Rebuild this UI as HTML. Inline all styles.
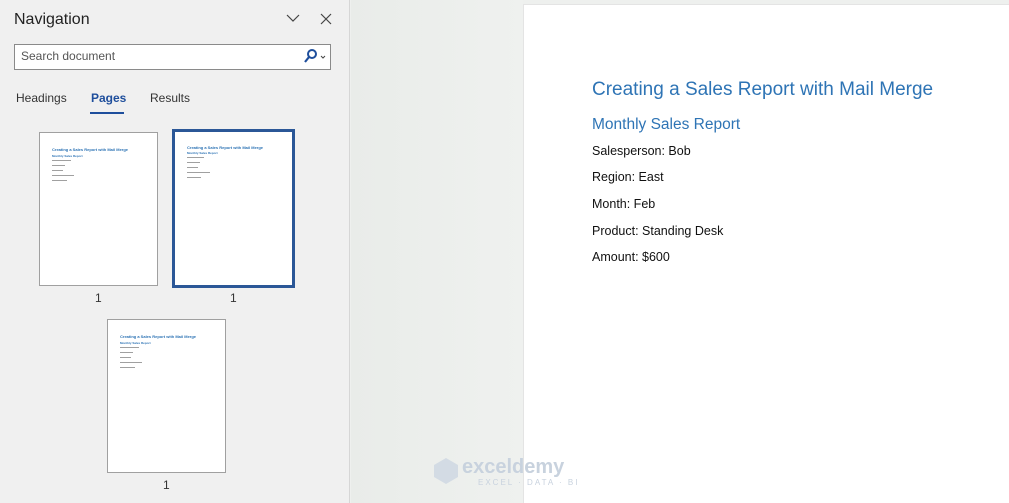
<!DOCTYPE html><html><head><style>
*{margin:0;padding:0;box-sizing:border-box}
body{width:1009px;height:503px;overflow:hidden;position:relative;font-family:"Liberation Sans",sans-serif;background:#eef0ee}
.nav{position:absolute;left:0;top:0;width:350px;height:503px;background:#f0f0f0;border-right:1px solid #d6d6d6}
.a{position:absolute;white-space:nowrap}
.th{position:absolute;background:#fff;border:1px solid #a0a0a0}
.th .t{position:absolute;left:12px;top:14px;font-size:4px;color:#2e74b5;font-weight:bold}
.th .s{position:absolute;left:12px;top:21px;font-size:3px;color:#2e74b5;font-weight:bold}
.th .l{position:absolute;left:12px;height:1px;background:#777;opacity:.7}
.mid{position:absolute;left:351px;top:0;width:172px;height:503px;background:linear-gradient(90deg,#e9ece9,#eff1ef)}
.doc{position:absolute;left:523px;top:4px;width:486px;height:499px;background:#fff;border-left:1px solid #e4e4e4;border-top:1px solid #e4e4e4}
.dt{position:absolute;left:68px;color:#2e74b5;white-space:nowrap}
.db{position:absolute;left:68px;font-size:12.5px;color:#111;white-space:nowrap}
</style></head><body>
<div class="nav">
<div class="a" style="left:14px;top:11px;font-size:16px;color:#222">Navigation</div>
<svg class="a" style="left:286px;top:13px" width="14" height="10"><path d="M1 2l6 6 6-6" fill="none" stroke="#444" stroke-width="1.2"/></svg>
<svg class="a" style="left:320px;top:13px" width="12" height="12"><path d="M1 1l10 10M11 1L1 11" stroke="#444" stroke-width="1.2"/></svg>
<div class="a" style="left:14px;top:44px;width:317px;height:26px;background:#fff;border:1px solid #8a8a8a"></div>
<div class="a" style="left:21px;top:49px;font-size:12px;color:#555">Search document</div>
<svg class="a" style="left:303px;top:48px" width="26" height="16"><circle cx="9" cy="6" r="4" fill="none" stroke="#1e4e9c" stroke-width="2"/><path d="M6 9l-4 5" stroke="#1e4e9c" stroke-width="2.2"/><path d="M18 8l2 2 2-2" fill="none" stroke="#444"/></svg>
<div class="a" style="left:16px;top:91px;font-size:12px;color:#333">Headings</div>
<div class="a" style="left:91px;top:91px;font-size:12px;color:#1e4e9c;font-weight:bold">Pages</div>
<div class="a" style="left:90px;top:112px;width:34px;height:2px;background:#1e4e9c"></div>
<div class="a" style="left:150px;top:91px;font-size:12px;color:#333">Results</div>
<div class="th" style="left:39px;top:132px;width:119px;height:154px"><div class="t">Creating a Sales Report with Mail Merge</div><div class="s">Monthly Sales Report</div><div class="l" style="top:27px;width:19px"></div><div class="l" style="top:32px;width:13px"></div><div class="l" style="top:37px;width:11px"></div><div class="l" style="top:42px;width:22px"></div><div class="l" style="top:47px;width:15px"></div></div>
<div class="th" style="left:172px;top:129px;width:123px;height:159px;border:3px solid #2b5797"><div class="t" style="top:13px">Creating a Sales Report with Mail Merge</div><div class="s" style="top:19px">Monthly Sales Report</div><div class="l" style="top:25px;width:17px"></div><div class="l" style="top:30px;width:13px"></div><div class="l" style="top:35px;width:11px"></div><div class="l" style="top:40px;width:23px"></div><div class="l" style="top:45px;width:14px"></div></div>
<div class="th" style="left:107px;top:319px;width:119px;height:154px"><div class="t">Creating a Sales Report with Mail Merge</div><div class="s">Monthly Sales Report</div><div class="l" style="top:27px;width:19px"></div><div class="l" style="top:32px;width:13px"></div><div class="l" style="top:37px;width:11px"></div><div class="l" style="top:42px;width:22px"></div><div class="l" style="top:47px;width:15px"></div></div>
<div class="a" style="left:95px;top:291px;font-size:12px;color:#333">1</div>
<div class="a" style="left:230px;top:291px;font-size:12px;color:#333">1</div>
<div class="a" style="left:163px;top:478px;font-size:12px;color:#333">1</div>
</div>
<div class="mid"></div>
<div class="doc">
<div class="dt" style="top:74px;font-size:19px">Creating a Sales Report with Mail Merge</div>
<div class="dt" style="top:111px;font-size:15.5px">Monthly Sales Report</div>
<div class="db" style="top:139px">Salesperson: Bob</div>
<div class="db" style="top:165px">Region: East</div>
<div class="db" style="top:192px">Month: Feb</div>
<div class="db" style="top:219px">Product: Standing Desk</div>
<div class="db" style="top:245px">Amount: $600</div>
</div>
<svg class="a" style="left:432px;top:456px" width="28" height="30"><path d="M14 2l12 7v12l-12 7-12-7V9z" fill="#d3dbe4"/></svg>
<div class="a" style="left:462px;top:456px;font-size:20px;color:#c8d2de;font-weight:bold">exceldemy</div>
<div class="a" style="left:478px;top:478px;font-size:8px;color:#c8d2de;letter-spacing:2px">EXCEL · DATA · BI</div>
</body></html>
